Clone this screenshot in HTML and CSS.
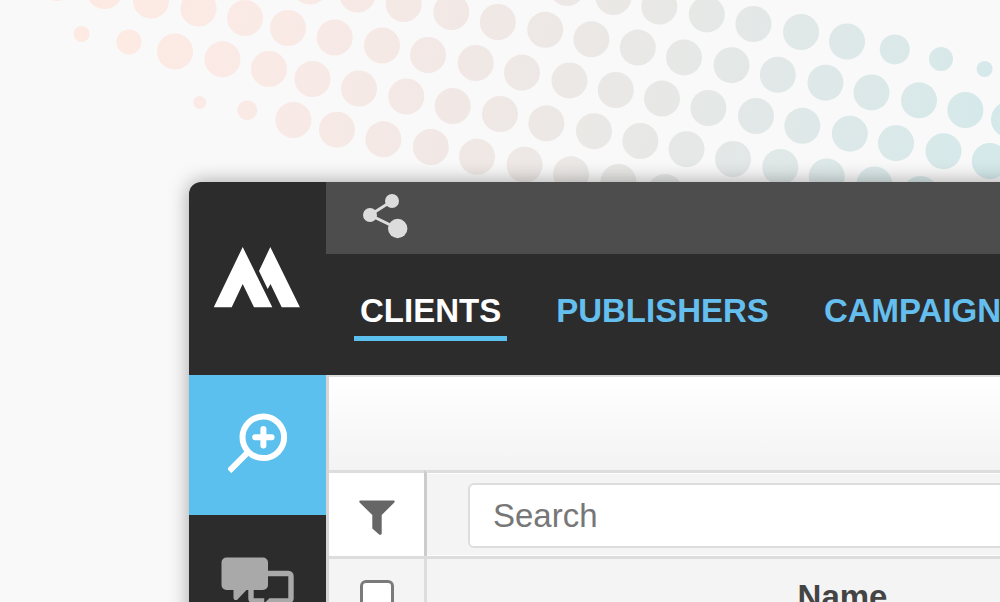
FILE: index.html
```
<!DOCTYPE html>
<html lang="en">
<head>
    <meta charset="UTF-8">
    <meta name="viewport" content="width=device-width, initial-scale=1.0">
    <title>Clients</title>
    <link rel="stylesheet" href="styles.css">
</head>
<body>
    <svg class="dots" width="1040" height="220" viewBox="0 0 1040 220" aria-hidden="true">
        <defs>
            <linearGradient id="dotFill" gradientUnits="userSpaceOnUse" x1="80" y1="0" x2="980" y2="200">
                <stop offset="0" stop-color="#fdeae2"/>
                <stop offset="0.2" stop-color="#faeae6"/>
                <stop offset="0.42" stop-color="#f1e8e5"/>
                <stop offset="0.62" stop-color="#e8e8e6"/>
                <stop offset="0.8" stop-color="#dfe8e8"/>
                <stop offset="1" stop-color="#d5e9ea"/>
            </linearGradient>
        </defs>
        <g fill="url(#dotFill)">
            <circle cx="567" cy="-12" r="18"/><circle cx="613.5" cy="-3" r="18"/><circle cx="659.3" cy="6.5" r="18"/><circle cx="706.8" cy="14.4" r="18"/><circle cx="753.4" cy="24" r="18"/><circle cx="801" cy="32" r="18"/><circle cx="847" cy="41.5" r="18"/><circle cx="894.8" cy="49.4" r="15"/><circle cx="941" cy="59" r="12"/><circle cx="984.6" cy="69" r="8"/>

            <circle cx="310" cy="-13.5" r="18"/><circle cx="357.5" cy="-5.5" r="18"/><circle cx="403.7" cy="4" r="18"/><circle cx="451.3" cy="12" r="18"/><circle cx="497.8" cy="22" r="18"/><circle cx="545.2" cy="29.8" r="18"/><circle cx="591.4" cy="39.3" r="18"/><circle cx="637.8" cy="47.6" r="18"/><circle cx="684" cy="57.4" r="18"/><circle cx="731.5" cy="65.2" r="18"/><circle cx="777.8" cy="74.8" r="18"/><circle cx="825.5" cy="82.7" r="18"/><circle cx="871.5" cy="92.4" r="18"/><circle cx="919" cy="100.3" r="18"/><circle cx="965.4" cy="110" r="18"/><circle cx="1009" cy="119.5" r="18"/>

            <circle cx="57" cy="-13" r="14"/><circle cx="104.5" cy="-9" r="18"/><circle cx="151" cy="0.5" r="18"/><circle cx="198.5" cy="8.5" r="18"/><circle cx="245" cy="18" r="18"/><circle cx="288" cy="28" r="18"/><circle cx="334.7" cy="37.5" r="18"/><circle cx="382" cy="45.5" r="18"/><circle cx="428" cy="55" r="18"/><circle cx="475.7" cy="63" r="18"/><circle cx="522" cy="72.6" r="18"/><circle cx="569.5" cy="80.4" r="18"/><circle cx="615.8" cy="90" r="18"/><circle cx="662" cy="98.6" r="18"/><circle cx="708.4" cy="108" r="18"/><circle cx="756" cy="116" r="18"/><circle cx="802.3" cy="125.8" r="18"/><circle cx="849.8" cy="133.7" r="18"/><circle cx="896" cy="143.2" r="18"/><circle cx="943.5" cy="151.2" r="18"/><circle cx="989.8" cy="161" r="18"/>

            <circle cx="81.5" cy="34" r="8"/><circle cx="129" cy="42" r="12.5"/><circle cx="175" cy="51.5" r="18"/><circle cx="222.5" cy="59.3" r="18"/><circle cx="269" cy="69" r="18"/><circle cx="312.5" cy="79" r="18"/><circle cx="359" cy="88.5" r="18"/><circle cx="406.3" cy="96.5" r="18"/><circle cx="452.7" cy="106" r="18"/><circle cx="500" cy="114" r="18"/><circle cx="546.4" cy="123.3" r="18"/><circle cx="594" cy="131.2" r="18"/><circle cx="640.4" cy="141" r="18"/><circle cx="686.5" cy="149.2" r="18"/><circle cx="733" cy="159" r="18"/><circle cx="780.3" cy="167" r="18"/><circle cx="826.7" cy="176.5" r="18"/><circle cx="874.4" cy="184.5" r="18"/><circle cx="920.5" cy="194" r="18"/>

            <circle cx="199.7" cy="102.5" r="6.5"/><circle cx="247.3" cy="110.3" r="10"/><circle cx="293.4" cy="120" r="18"/><circle cx="336.9" cy="129.7" r="18"/><circle cx="383.4" cy="139.3" r="18"/><circle cx="430.8" cy="147" r="18"/><circle cx="477" cy="156.8" r="18"/><circle cx="524.6" cy="164.7" r="18"/><circle cx="571" cy="174.3" r="18"/><circle cx="618.5" cy="182" r="18"/><circle cx="665" cy="192" r="18"/>
        </g>
    </svg>

    <div class="app">
        <aside class="sidebar">
            <a class="logo" href="#" aria-label="Home">
                <svg width="87" height="62" viewBox="0 0 87 62" fill="#fff">
                    <path d="M28.7 1 58.3 61.3H40L28.7 38 17.7 61.3H-.3z"/>
                    <path d="M56.3 1 85.9 61.3H67.7L56.5 38 53.7 43 45 25z"/>
                </svg>
            </a>
            <button class="side-button active" type="button" aria-label="Explore">
                <svg width="60" height="60" viewBox="0 0 60 60" fill="none" stroke="#fff" stroke-width="6">
                    <circle cx="35.3" cy="24.3" r="20.8"/>
                    <path d="M20 39.2 1.2 58"/>
                    <path d="M27.2 24.3h16.4M35.4 16v16.6" stroke-linecap="round"/>
                </svg>
            </button>
            <button class="side-button" type="button" aria-label="Messages">
                <svg width="73" height="56" viewBox="0 0 73 56">
                    <path d="M44 16.5h23.5a2.5 2.5 0 0 1 2.5 2.5v22.5a2.5 2.5 0 0 1-2.5 2.5H49.5L40.500 52.500V44H32.500a2.500 2.500 0 0 1-2.500-2.500V30" fill="none" stroke="#a9a9a9" stroke-width="5.4"/>
                    <path d="M5.5.5H42a5 5 0 0 1 5 5V28a5 5 0 0 1-5 5H25.500L16 43h-1.500q-2 0-2-2v-8h-7a5 5 0 0 1-5-5V5.500a5 5 0 0 1 5-5z" fill="#a9a9a9"/>
                </svg>
            </button>
        </aside>

        <main class="main">
            <div class="topbar">
                <button class="share-button" type="button" aria-label="Share">
                    <svg width="46" height="46" viewBox="0 0 46 46" fill="#dcdcdc">
                        <path d="M30 8 8 22l27.7 13.5" fill="none" stroke="#dcdcdc" stroke-width="3"/>
                        <circle cx="30" cy="8" r="7"/>
                        <circle cx="8" cy="22" r="7"/>
                        <circle cx="35.7" cy="35.5" r="9.7"/>
                    </svg>
                </button>
            </div>
            <nav class="nav">
                <a class="nav-link current" href="#">CLIENTS</a>
                <a class="nav-link" href="#">PUBLISHERS</a>
                <a class="nav-link" href="#">CAMPAIGNS</a>
            </nav>
            <div class="content">
                <div class="toolbar"></div>
                <table class="grid">
                    <thead>
                        <tr class="filter-row">
                            <td class="check-col">
                                <button class="filter-button" type="button" aria-label="Filter">
                                    <svg width="36" height="35" viewBox="0 0 36 35" fill="#666">
                                        <path d="M1 .4h34q1.200.8.3 2.200L22.700 15v18.500q0 1.300-1.500 1.200h-.8L13.300 28.500V15L.6 2.600Q-.2 1.200 1 .4z"/>
                                    </svg>
                                </button>
                            </td>
                            <td class="search-cell">
                                <input class="search" type="text" placeholder="Search" aria-label="Search">
                            </td>
                        </tr>
                        <tr class="head-row">
                            <th class="check-col"><input class="check" type="checkbox" aria-label="Select all"></th>
                            <th scope="col">Name</th>
                        </tr>
                    </thead>
                </table>
            </div>
        </main>
    </div>
</body>
</html>
```
FILE: styles.css
```
* {
    box-sizing: border-box;
}

body {
    margin: 0;
    height: 100vh;
    overflow: hidden;
    background-color: #f9f9f9;
    font-family: "Liberation Sans", Arial, sans-serif;
    font-size: 33px;
}

svg {
    display: block;
}

button {
    border: none;
    padding: 0;
    background: none;
    cursor: pointer;
}

/* halftone pattern behind the window */
.dots {
    position: absolute;
    top: 0;
    left: 0;
}

/* the window runs off the right and bottom edges */
.app {
    position: relative;
    display: flex;
    min-height: 100vh;
    margin: 182px -258px 0 189px;
    border-radius: 12px;
    overflow: hidden;
    background-color: #f4f4f4;
    box-shadow: 0 0 20px rgba(0, 0, 0, 0.35);
}

.sidebar {
    width: 137px;
    flex-shrink: 0;
    background-color: #2c2c2c;
}

.logo {
    display: flex;
    align-items: center;
    justify-content: center;
    height: 193px;
    padding-bottom: 4px;
}

.side-button {
    display: flex;
    align-items: center;
    justify-content: center;
    width: 100%;
    height: 140px;
}

.side-button.active {
    padding-bottom: 4px;
    background-color: #5bc0ed;
}

.main {
    flex: 1;
    min-width: 0;
}

.topbar {
    display: flex;
    align-items: center;
    height: 72px;
    padding: 0 36px 4px;
    background-color: #4d4d4d;
}

.nav {
    display: flex;
    align-items: flex-start;
    gap: 43px;
    height: 121px;
    padding: 34px 28px 0;
    background-color: #2c2c2c;
}

.nav-link {
    padding: 4px 6px 6px;
    border-bottom: 5px solid transparent;
    line-height: 38px;
    font-weight: bold;
    color: #65bfee;
    text-decoration: none;
}

.nav-link.current {
    border-color: #5bc0ed;
    color: #fff;
}

.content {
    border-left: 3px solid #d6d6d6;
}

.toolbar {
    height: 95px;
    border-top: 2px solid #ddd;
    background: linear-gradient(#fff, #f3f3f3);
}

.grid {
    width: 100%;
    border-collapse: separate;
    border-spacing: 0;
    table-layout: fixed;
}

.grid td,
.grid th {
    padding: 0;
    border-top: 3px solid #ddd;
    border-left: 3px solid #ddd;
    color: #444;
}

.grid .check-col {
    width: 95px;
    border-left: none;
    text-align: center;
}

.filter-row td {
    height: 86px;
    background-color: #fff;
}

.filter-button {
    display: block;
    margin: 0 auto;
    padding-top: 6px;
}

.filter-row .search-cell {
    padding: 10px 0 8px 41px;
    border-left-color: #ccc;
    background-color: #f4f4f4;
    box-shadow: inset 0 1px #fff, inset 0 -1px #fff;
}

.search {
    display: block;
    width: 95%;
    height: 65px;
    padding: 0 23px;
    border: 2px solid #ddd;
    border-radius: 6px;
    background-color: #fff;
    font: inherit;
    color: #444;
}

.search::placeholder {
    color: #777;
}

.head-row th {
    height: 79px;
    background-color: #f4f4f4;
}

.check {
    appearance: none;
    display: block;
    width: 34px;
    height: 34px;
    margin: 0 auto;
    border: 3px solid #7a7a7a;
    border-radius: 6px;
    background-color: #fff;
}
```
